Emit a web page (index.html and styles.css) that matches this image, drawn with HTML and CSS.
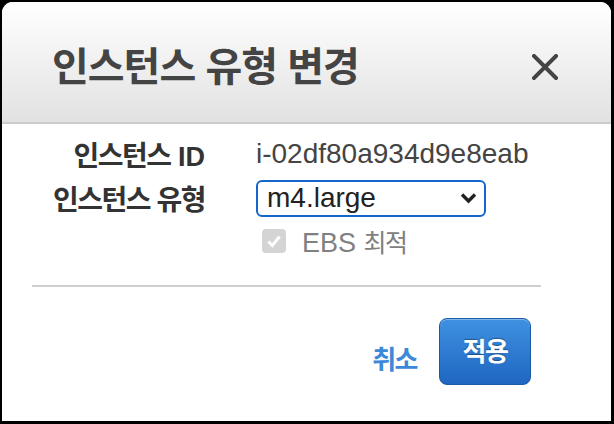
FILE: index.html
```html
<!DOCTYPE html>
<html lang="ko">
<head>
<meta charset="utf-8">
<link rel="stylesheet" href="styles.css">
</head>
<body>
<div class="dialog">
  <div class="header">
    <h1 class="title">인스턴스 유형 변경</h1>
    <button class="close" aria-label="닫기">
      <svg width="26" height="26" viewBox="0 0 26 26"><path d="M2 2 L24 24 M24 2 L2 24" stroke="#444" stroke-width="4" stroke-linecap="square" fill="none"/></svg>
    </button>
  </div>
  <div class="body">
    <div class="form">
      <div class="label"><span class="ko">인스턴스</span> ID</div>
      <div class="value">i-02df80a934d9e8eab</div>
      <div class="label"><span class="ko">인스턴스 유형</span></div>
      <div class="select">
        <span>m4.large</span>
        <svg width="17" height="12" viewBox="0 0 17 12"><path d="M2 2.5 L8.5 9 L15 2.5" stroke="#222" stroke-width="3.4" fill="none"/></svg>
      </div>
      <div></div>
      <div class="check">
        <span class="box"><svg width="18" height="18" viewBox="0 0 16 16"><path d="M3 8.5 L6.5 12 L13 4" stroke="#fff" stroke-width="2.6" fill="none"/></svg></span>
        <span class="check-label">EBS <span class="ko">최적</span></span>
      </div>
    </div>
    <div class="divider"></div>
    <div class="footer">
      <a class="cancel ko">취소</a>
      <button class="apply ko">적용</button>
    </div>
  </div>
</div>
</body>
</html>
```
FILE: styles.css
```css
html, body {
  margin: 0;
  padding: 0;
  background: #000;
  height: 100%;
}
body {
  font-family: "Liberation Sans", "Noto Sans CJK KR", sans-serif;
  padding: 2px 3px 3px 2px;
  box-sizing: border-box;
}
.dialog {
  background: #fff;
  border-radius: 11px 11px 0 0;
  height: 419px;
  overflow: hidden;
}
.header {
  height: 120px;
  background: linear-gradient(#ffffff, #e2e2e2);
  border-bottom: 2px solid #cccccc;
  display: flex;
  align-items: center;
  justify-content: space-between;
  padding: 0 53px 0 50px;
}
.title {
  margin: 0;
  font-family: "Noto Sans CJK KR", sans-serif;
  font-size: 40px;
  font-weight: 700;
  letter-spacing: -1px;
  color: #444;
  padding-top: 4px;
}
.close {
  border: 0;
  background: none;
  padding: 0;
  margin-top: 10px;
  display: flex;
}
.body {
  padding: 10px 0 0 30px;
}
.form {
  display: grid;
  grid-template-columns: 173px 300px;
  column-gap: 51px;
  row-gap: 4px;
  align-items: center;
}
.ko {
  font-family: "Noto Sans CJK KR", sans-serif;
  letter-spacing: -1.5px;
}
.label {
  text-align: right;
  font-size: 27px;
  font-weight: 700;
  color: #333;
  white-space: nowrap;
}
.label .ko {
  font-size: 28px;
}
.value {
  font-size: 28px;
  color: #444;
  white-space: nowrap;
}
.select {
  box-sizing: border-box;
  width: 230px;
  height: 37px;
  border: 2px solid #1466cc;
  border-radius: 6px;
  display: flex;
  align-items: center;
  justify-content: space-between;
  padding: 0 7px 0 9px;
  font-size: 28px;
  color: #222;
}
.check {
  display: flex;
  align-items: center;
  gap: 16px;
  margin-left: 6px;
  margin-top: 1px;
}
.box {
  width: 24px;
  height: 24px;
  background: #d4d4d4;
  border-radius: 4px;
  display: flex;
  align-items: center;
  justify-content: center;
}
.check-label {
  font-size: 27px;
  color: #808080;
}
.check-label .ko {
  font-size: 25px;
}
.divider {
  height: 2px;
  background: #cfcfcf;
  width: 509px;
  margin-top: 26px;
}
.footer {
  display: flex;
  align-items: center;
  justify-content: flex-end;
  gap: 22px;
  padding: 31px 80px 0 0;
}
.cancel {
  font-size: 26px;
  font-weight: 700;
  color: #3b89d8;
  margin-top: 12px;
}
.apply {
  width: 92px;
  height: 67px;
  border: 1px solid #1b5aa8;
  border-radius: 8px;
  background: linear-gradient(#3f91e2, #1f66c1);
  box-shadow: inset 0 1px 0 rgba(255,255,255,0.35);
  color: #fff;
  font-size: 26px;
  font-weight: 700;
  text-shadow: 0 -1px 1px rgba(0,0,0,0.35);
  padding: 0 0 4px;
}
```
